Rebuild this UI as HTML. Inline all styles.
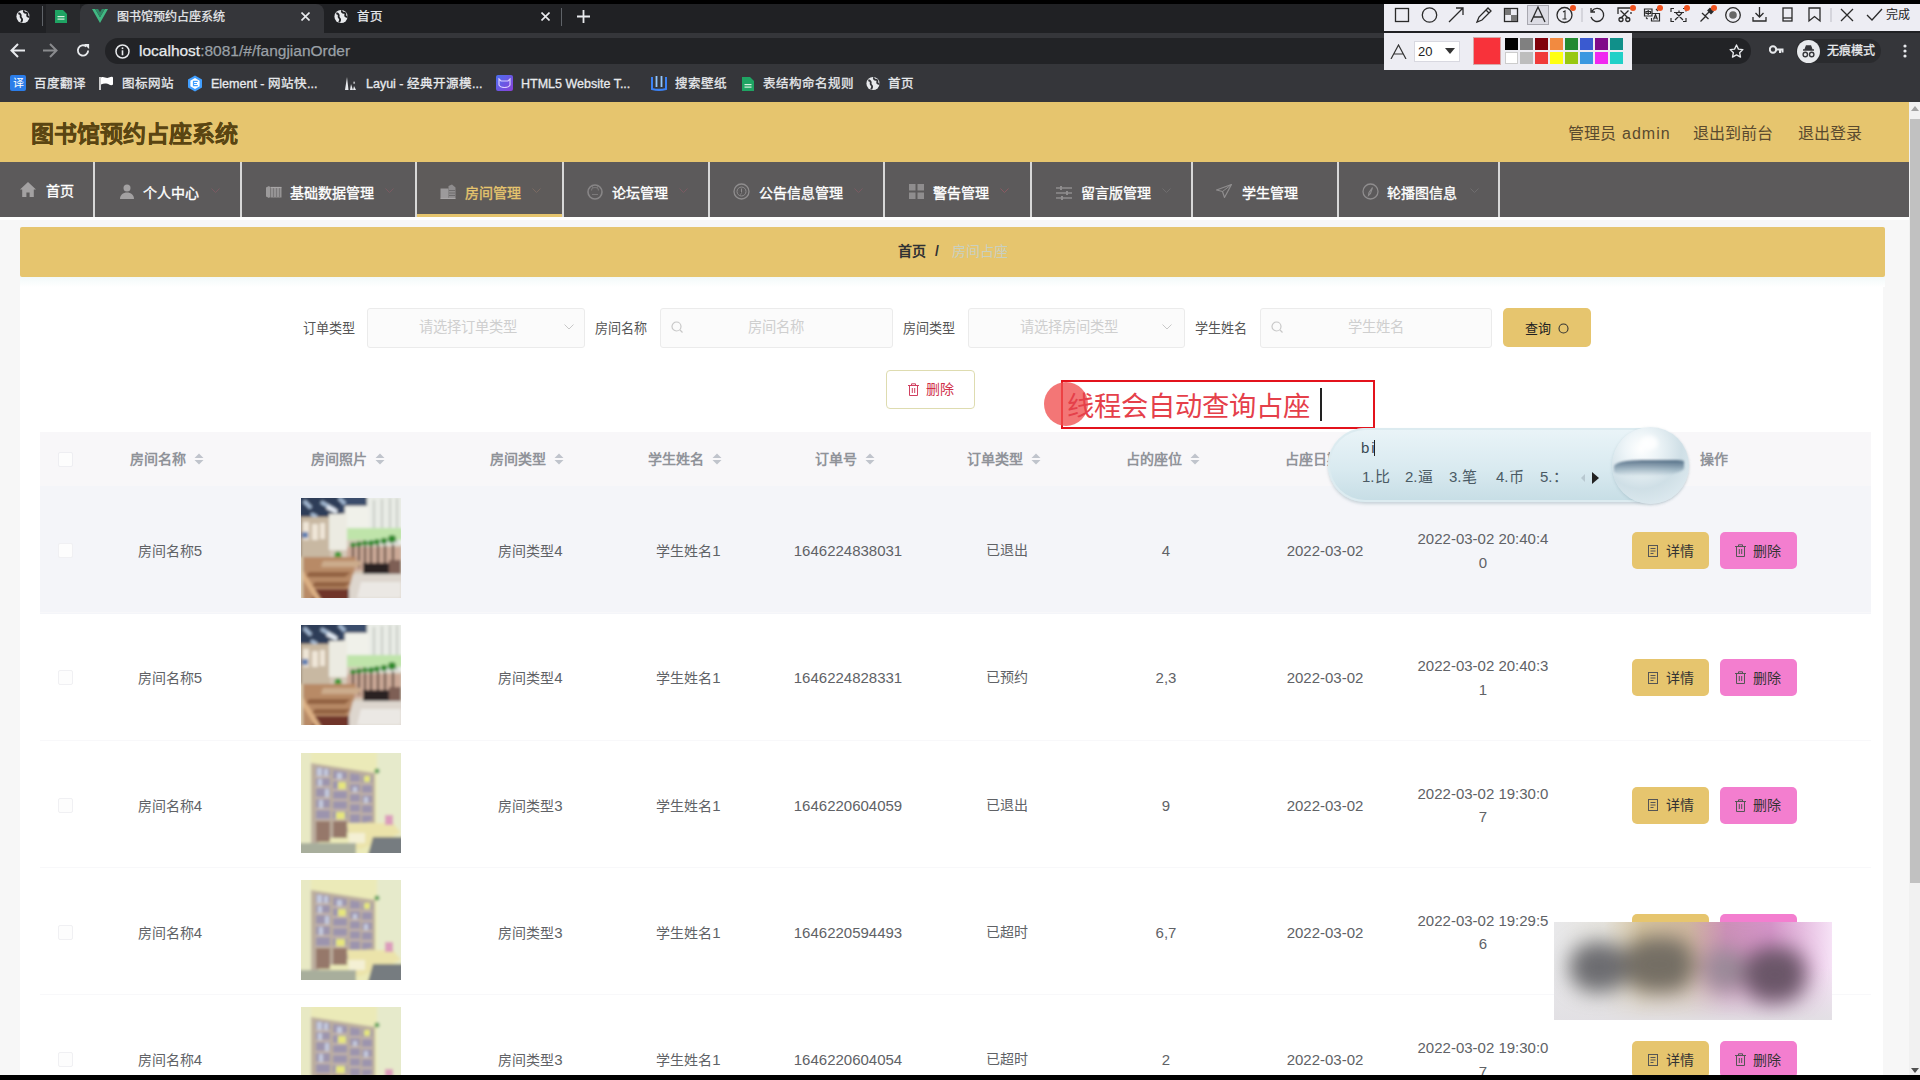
<!DOCTYPE html>
<html lang="zh-CN">
<head>
<meta charset="utf-8">
<style>
*{box-sizing:border-box;margin:0;padding:0}
html,body{width:1920px;height:1080px;overflow:hidden;background:#f7f7f7;font-family:"Liberation Sans",sans-serif}
.a{position:absolute}
.t{position:absolute;white-space:nowrap;line-height:1}
/* chrome */
#chrome{left:0;top:0;width:1920px;height:102px;background:#35363a}
#tabstrip{left:0;top:0;width:1920px;height:33px;background:#202124}
#topblack{left:0;top:0;width:1920px;height:4px;background:#000}
.tabtxt{color:#e8eaed;font-size:13px;-webkit-text-stroke:0.25px currentColor}
.bm{color:#e8eaed;font-size:12.5px;-webkit-text-stroke:0.3px currentColor}
/* header */
#hdr{left:0;top:102px;width:1909px;height:60px;background:#e6c56e}
#nav{left:0;top:162px;width:1909px;height:55px;background:#5c5a5b}
.sep{position:absolute;top:162px;width:2px;height:55px;background:#d8d8d8}
.nt{position:absolute;color:#fff;font-size:14px;font-weight:normal;-webkit-text-stroke:0.35px currentColor;line-height:1;white-space:nowrap}
.ni{position:absolute}
/* body */
#crumb{left:20px;top:227px;width:1865px;height:50px;background:#e6c56e;border-radius:2px}
#card{left:20px;top:287px;width:1863px;height:800px;background:#fff}
.lbl{position:absolute;color:#555;font-size:13.1px;line-height:1;white-space:nowrap}
.inp{position:absolute;top:308px;height:40px;background:#fbfbfb;border:1px solid #ebebeb;border-radius:3px}
.ph{position:absolute;color:#cfcfcf;font-size:14.3px;line-height:1;white-space:nowrap}
/* table */
.th{position:absolute;color:#909399;font-size:14px;font-weight:bold;line-height:1;white-space:nowrap}
.td{position:absolute;color:#606266;font-size:14px;line-height:1;white-space:nowrap;text-align:center}
.n{font-size:15px}
.btn{position:absolute;height:37px;width:77px;border-radius:5px;font-size:14px;color:#333}
</style>
</head>
<body>
<svg width="0" height="0" style="position:absolute">
<defs>
<filter id="bl" x="0" y="0" width="100%" height="100%"><feGaussianBlur stdDeviation="1.7"/></filter>
<symbol id="imgL" viewBox="0 0 100 100">
<g filter="url(#bl)">
<rect x="-5" y="-5" width="110" height="110" fill="#d4c8b8"/>
<path d="M-5 -5h80v14l-30 6-50 8z" fill="#3a4e6c"/>
<path d="M-5 -5h45v24H-5z" fill="#2e3e58"/>
<path d="M3 3l7 7M20 4l14 8M38 0l6 6M10 16l6 3" stroke="#a8bed8" stroke-width="3.5"/>
<path d="M26 9l10 5" stroke="#e8eef6" stroke-width="4"/>
<path d="M66 -5h39v52H66z" fill="#e9ece6"/>
<path d="M44 8h24v34H44z" fill="#f0f1ea"/>
<path d="M73 2v44M81 1v45M89 0v46M96 0v46" stroke="#b8beb6" stroke-width="1.4"/>
<path d="M-5 19h34v40H-5z" fill="#c8b8a2"/>
<path d="M28 16h18v36H28z" fill="#ecebe2"/>
<path d="M2 24h6v18H2zM11 26h6v16h-6zM19 25h5v16h-5z" fill="#efe6d8"/>
<path d="M-5 20h5v42h-5z" fill="#6e6458"/>
<path d="M1 34h6v6H1z" fill="#5a7cb0"/>
<path d="M46 30h56v12H46z" fill="#bfe4aa"/>
<circle cx="52" cy="47" r="2.8" fill="#2e8a2a"/><circle cx="58" cy="46" r="2.8" fill="#2e8a2a"/><circle cx="64" cy="45" r="2.8" fill="#2e8a2a"/><circle cx="70" cy="45" r="3" fill="#2e8a2a"/><circle cx="76" cy="44" r="3" fill="#2e8a2a"/><circle cx="83" cy="43" r="3.3" fill="#2e8a2a"/><circle cx="91" cy="41" r="4" fill="#2e8a2a"/>
<circle cx="37" cy="57" r="3.5" fill="#3a9a30"/>
<path d="M46 49h54v24H46z" fill="#cba896"/>
<path d="M52 49v20M58 48v22M64 48v22M70 48v22M77 47v24M84 47v25M92 46v26" stroke="#3e2c26" stroke-width="1.8"/>
<path d="M62 65h28v11H62z" fill="#2a2222"/>
<path d="M88 62h12v22H88z" fill="#7e5e54"/>
<path d="M-5 59h60l-6 46H-5z" fill="#b88a66"/>
<path d="M22 63h38l-2 6H20z" fill="#ccac8c"/>
<path d="M8 74h42l-6 5H4zM14 84h36l-6 5H10z" fill="#92603f"/>
<path d="M52 76h53v29H44z" fill="#ddd6ce"/>
<path d="M60 84h40v16H56z" fill="#ebe8e4"/>
<path d="M14 91h34v14H10z" fill="#70362c"/>
<path d="M-5 66l24 38" stroke="#dcb084" stroke-width="5"/>
<path d="M-5 59h7v46h-7z" fill="#d8caae"/>
</g>
</symbol>
<symbol id="imgB" viewBox="0 0 100 100">
<g filter="url(#bl)">
<rect x="-5" y="-5" width="110" height="110" fill="#ebeab8"/>
<rect x="76" y="-5" width="29" height="88" fill="#e6eacb"/>
<path d="M-5 -5h15v95H-5z" fill="#e8e9c4"/>
<path d="M10 10l64 10v50l-64 22z" fill="#bcae9e"/>
<path d="M15 14l14 2v72l-14 1zM32 17l14 2v62l-14 4zM49 20l10 1.5v54l-10 3zM61 22l10 1.5v44l-10 3z" fill="#9c94ae"/>
<path d="M15 24h14M15 34h14M15 45h14M15 56h14M15 67h14M15 78h14M32 27h14M32 37h14M32 47h14M32 57h14M32 67h14M49 30h10M49 40h10M49 50h10M49 60h10M61 31h10M61 41h10M61 51h10M61 61h10" stroke="#c8b8a8" stroke-width="1.8"/>
<path d="M16 15h5v8h-5zM23 16h4v7h-4zM17 26h4v7h-4zM24 36h4v8h-4zM18 47h4v8h-4zM36 20h5v6h-5zM52 34h4v5h-4zM63 44h4v6h-4z" fill="#c4cade"/>
<path d="M37 29h8v7h-8zM35 59h9v7h-9zM63 23h6v6h-6z" fill="#e6e67c"/>
<path d="M15 68h14v21H15zM32 68h14v17H32z" fill="#96786a"/>
<path d="M46 70h46l8 10-40 16H50z" fill="#ebe3aa"/>
<path d="M48 80h16v10H48z" fill="#f4f0d4"/>
<path d="M84 62h8v10h-8z" fill="#dc9cbc"/>
<path d="M-5 90h60v15H-5z" fill="#a8ae9c"/>
<path d="M72 84h33v21H66z" fill="#767c80"/>
<circle cx="76" cy="18" r="2.5" fill="#58a058"/>
</g>
</symbol>
</defs>
</svg>
<!-- ============ BROWSER CHROME ============ -->
<div class="a" id="chrome"></div>
<div class="a" id="tabstrip"></div>
<div class="a" id="topblack"></div>

<!-- tab strip content -->
<svg class="a" style="left:15px;top:9px" width="16" height="15" viewBox="0 0 16 16"><circle cx="8" cy="8" r="7" fill="#e8eaed"/><path d="M3 4.5c2 .5 3 1.5 2.5 3s1 2 1.5 3.5-1 2.5-1 3.5M9 1.5c-.5 1.5.5 2.5 2 2.5s2 1 1.5 2.5 1 2 2.5 1.5" stroke="#202124" stroke-width="2" fill="none"/></svg>
<div class="a" style="left:42px;top:6px;width:1px;height:20px;background:#5f6368"></div>
<div class="a" style="left:46px;top:4px;width:34px;height:29px;background:#28292c"></div>
<svg class="a" style="left:54px;top:9px" width="14" height="14" viewBox="0 0 14 14"><path d="M1 1h8l4 4v9H1z" fill="#1fa463"/><rect x="3.5" y="7" width="7" height="1.2" fill="#d8f0e0"/><rect x="3.5" y="9.5" width="7" height="1.2" fill="#d8f0e0"/></svg>
<div class="a" style="left:80px;top:4px;width:244px;height:30px;background:#35363a;border-radius:8px 8px 0 0"></div>
<svg class="a" style="left:92px;top:9px" width="16" height="14" viewBox="0 0 16 14"><path d="M0 0h3.2L8 8.3 12.8 0H16L8 14z" fill="#41b883"/><path d="M3.2 0h2.9L8 3.3 9.9 0h2.9L8 8.3z" fill="#2e8a66"/></svg>
<div class="t tabtxt" style="left:117px;top:11px;font-size:12px">图书馆预约占座系统</div>
<svg class="a" style="left:301px;top:12px" width="9" height="9" viewBox="0 0 9 9"><path d="M0.5 0.5l8 8M8.5 0.5l-8 8" stroke="#e8eaed" stroke-width="1.6"/></svg>
<svg class="a" style="left:333px;top:9px" width="16" height="15" viewBox="0 0 16 16"><circle cx="8" cy="8" r="7" fill="#e8eaed"/><path d="M3 4.5c2 .5 3 1.5 2.5 3s1 2 1.5 3.5-1 2.5-1 3.5M9 1.5c-.5 1.5.5 2.5 2 2.5s2 1 1.5 2.5 1 2 2.5 1.5" stroke="#202124" stroke-width="2" fill="none"/></svg>
<div class="t tabtxt" style="left:357px;top:11px;font-size:12.5px">首页</div>
<svg class="a" style="left:541px;top:12px" width="9" height="9" viewBox="0 0 9 9"><path d="M0.5 0.5l8 8M8.5 0.5l-8 8" stroke="#e8eaed" stroke-width="1.6"/></svg>
<div class="a" style="left:561px;top:8px;width:1px;height:18px;background:#5f6368"></div>
<svg class="a" style="left:577px;top:10px" width="13" height="13" viewBox="0 0 13 13"><path d="M6.5 0v13M0 6.5h13" stroke="#e8eaed" stroke-width="1.8"/></svg>
<!-- toolbar -->
<svg class="a" style="left:10px;top:43px" width="16" height="15" viewBox="0 0 16 15"><path d="M15 7.5H2M8 1L1.5 7.5 8 14" stroke="#e8eaed" stroke-width="2" fill="none"/></svg>
<svg class="a" style="left:42px;top:43px" width="16" height="15" viewBox="0 0 16 15"><path d="M1 7.5h13M8 1l6.5 6.5L8 14" stroke="#8a8b8e" stroke-width="2" fill="none"/></svg>
<svg class="a" style="left:75px;top:43px" width="16" height="15" viewBox="0 0 16 16"><path d="M13.5 8A5.5 5.5 0 1 1 11.6 3.8" stroke="#e8eaed" stroke-width="2" fill="none"/><path d="M9 1h5.5v5.5z" fill="#e8eaed"/></svg>
<div class="a" style="left:105px;top:38px;width:1646px;height:26px;background:#222326;border-radius:13px"></div>
<svg class="a" style="left:115px;top:44px" width="15" height="15" viewBox="0 0 15 15"><circle cx="7.5" cy="7.5" r="6.5" stroke="#e8eaed" stroke-width="1.5" fill="none"/><rect x="6.7" y="6.3" width="1.6" height="5" fill="#e8eaed"/><rect x="6.7" y="3.4" width="1.6" height="1.7" fill="#e8eaed"/></svg>
<div class="t" style="left:139px;top:42.5px;font-size:15.5px;color:#e8eaed;-webkit-text-stroke:0.25px currentColor">localhost<span style="color:#9aa0a6">:8081/#/fangjianOrder</span></div>
<svg class="a" style="left:1729px;top:44px" width="15" height="14" viewBox="0 0 24 23"><path d="M12 1.5l3.2 6.9 7.3.8-5.4 5 1.5 7.3L12 17.8l-6.6 3.7 1.5-7.3-5.4-5 7.3-.8z" stroke="#e8eaed" stroke-width="2.2" fill="none" stroke-linejoin="round"/></svg>
<svg class="a" style="left:1769px;top:45px" width="15" height="11" viewBox="0 0 15 11"><circle cx="4" cy="4.5" r="3.2" stroke="#e8eaed" stroke-width="2" fill="none"/><path d="M7 4.5h7.5M11 4.5v3.5M13.5 4.5v3" stroke="#e8eaed" stroke-width="2"/></svg>
<div class="a" style="left:1796px;top:39px;width:85px;height:24px;background:#2a2b2e;border-radius:12px"></div>
<svg class="a" style="left:1797px;top:40px" width="23" height="23" viewBox="0 0 23 23"><circle cx="11.5" cy="11.5" r="11.5" fill="#e8eaed"/><path d="M6 10h11M8 10l1.5-4h4l1.5 4" stroke="#35363a" stroke-width="1.6" fill="#35363a"/><circle cx="8.3" cy="14.5" r="2.2" stroke="#35363a" stroke-width="1.4" fill="none"/><circle cx="14.7" cy="14.5" r="2.2" stroke="#35363a" stroke-width="1.4" fill="none"/></svg>
<div class="t" style="left:1827px;top:45px;font-size:12px;color:#e8eaed;-webkit-text-stroke:0.3px currentColor">无痕模式</div>
<svg class="a" style="left:1903px;top:44px" width="4" height="14" viewBox="0 0 4 14"><circle cx="2" cy="2" r="1.6" fill="#e8eaed"/><circle cx="2" cy="7" r="1.6" fill="#e8eaed"/><circle cx="2" cy="12" r="1.6" fill="#e8eaed"/></svg>
<!-- bookmarks -->
<div class="a" style="left:10px;top:75px;width:16px;height:16px;background:#2b7de9;border-radius:2px;color:#fff;font-size:11px;line-height:16px;text-align:center">译</div>
<div class="t bm" style="left:34px;top:78px">百度翻译</div>
<svg class="a" style="left:99px;top:76px" width="15" height="14" viewBox="0 0 15 14"><path d="M1 1v13" stroke="#fff" stroke-width="1.5"/><path d="M2 1.5c3-1.5 5 1.5 8 0s3.5-.5 4 0v7c-1 1-2.5 1-4 0s-5-1.5-8 0z" fill="#fff"/></svg>
<div class="t bm" style="left:122px;top:78px">图标网站</div>
<svg class="a" style="left:187px;top:75px" width="16" height="17" viewBox="0 0 16 17"><path d="M8 .5l7 4v8l-7 4-7-4v-8z" fill="#409eff"/><path d="M8 3l4.6 2.7v5.6L8 14l-4.6-2.7V5.7z" fill="#fff"/><path d="M10.8 6.3H6.5v4.4h4.3M6.5 8.5h3.5" stroke="#409eff" stroke-width="1.2" fill="none"/></svg>
<div class="t bm" style="left:211px;top:78px">Element - 网站快...</div>
<svg class="a" style="left:344px;top:76px" width="13" height="14" viewBox="0 0 13 14"><path d="M3 1l-2 13h3.5zM7 8l-1 6h3zM10 5l-.8 2.5h2zM10 10l-1 4h3z" fill="#e8eaed"/></svg>
<div class="t bm" style="left:366px;top:78px">Layui - 经典开源模...</div>
<div class="a" style="left:496px;top:75px;width:17px;height:16px;background:linear-gradient(135deg,#4a6ff0,#8a40d8);border-radius:2px"></div>
<svg class="a" style="left:498px;top:78px" width="13" height="10" viewBox="0 0 13 10"><path d="M1 1l2 2h7l2-2v6c-1 2-3 2.5-5.5 2.5S2 9 1 7z" stroke="#d8ccff" stroke-width="1.2" fill="none"/></svg>
<div class="t bm" style="left:521px;top:78px">HTML5 Website T...</div>
<svg class="a" style="left:651px;top:75px" width="16" height="16" viewBox="0 0 16 16"><path d="M1 2v12c4 1 10 1 14 0V2" stroke="#3b82f6" stroke-width="2" fill="none"/><path d="M5.5 1v11M10.5 1v11" stroke="#93c5fd" stroke-width="1.8"/></svg>
<div class="t bm" style="left:675px;top:78px">搜索壁纸</div>
<svg class="a" style="left:741px;top:76px" width="14" height="15" viewBox="0 0 14 15"><path d="M1 1h8l4 4v10H1z" fill="#1fa463"/><rect x="3.5" y="8" width="7" height="1.2" fill="#d8f0e0"/><rect x="3.5" y="10.5" width="7" height="1.2" fill="#d8f0e0"/></svg>
<div class="t bm" style="left:763px;top:78px">表结构命名规则</div>
<svg class="a" style="left:865px;top:76px" width="16" height="15" viewBox="0 0 16 16"><circle cx="8" cy="8" r="7" fill="#e8eaed"/><path d="M3 4.5c2 .5 3 1.5 2.5 3s1 2 1.5 3.5-1 2.5-1 3.5M9 1.5c-.5 1.5.5 2.5 2 2.5s2 1 1.5 2.5 1 2 2.5 1.5" stroke="#35363a" stroke-width="2" fill="none"/></svg>
<div class="t bm" style="left:888px;top:78px">首页</div>
<!--CHROME_END-->

<!-- ============ APP HEADER ============ -->
<div class="a" id="hdr"></div>
<div class="t" style="left:31px;top:123px;font-size:23px;font-weight:bold;color:#5a4512;-webkit-text-stroke:0.3px currentColor">图书馆预约占座系统</div>
<div class="t" style="left:1568px;top:126px;font-size:16px;color:#5a4a2e">管理员<span style="margin-left:6px;letter-spacing:1px">admin</span></div>
<div class="t" style="left:1693px;top:126px;font-size:16px;color:#5a4a2e">退出到前台</div>
<div class="t" style="left:1798px;top:126px;font-size:16px;color:#5a4a2e">退出登录</div>
<!-- nav -->
<div class="a" id="nav"></div>
<div class="a" style="left:416px;top:162px;width:147px;height:55px;background:#5e5b5a"></div>
<div class="a" style="left:416px;top:214px;width:147px;height:3px;background:#e6c56e"></div>
<div class="sep" style="left:93px"></div>
<div class="sep" style="left:240px"></div>
<div class="sep" style="left:415px"></div>
<div class="sep" style="left:562px"></div>
<div class="sep" style="left:708px"></div>
<div class="sep" style="left:883px"></div>
<div class="sep" style="left:1030px"></div>
<div class="sep" style="left:1191px"></div>
<div class="sep" style="left:1337px"></div>
<div class="sep" style="left:1498px"></div>
<!-- nav icons -->
<svg class="ni" style="left:20px;top:182px" width="16" height="15" viewBox="0 0 16 15"><path d="M8 0L0 7.5h2.2V15h4.2v-4.5h3.2V15h4.2V7.5H16z" fill="#a3a1a2"/></svg>
<div class="nt" style="left:46px;top:184px">首页</div>
<svg class="ni" style="left:120px;top:184px" width="14" height="15" viewBox="0 0 14 15"><circle cx="7" cy="4" r="3.5" fill="#a3a1a2"/><path d="M0 15c0-4 3-6.5 7-6.5s7 2.5 7 6.5z" fill="#a3a1a2"/></svg>
<div class="nt" style="left:143px;top:186px">个人中心</div>
<svg class="ni" style="left:265px;top:185.5px" width="17" height="12" viewBox="0 0 17 12"><path d="M1 1.5l3-1.5 1 1v10l-1 1-3-1.5z" fill="#9c9a9b"/><rect x="5.5" y="1.5" width="11" height="10" fill="#959394"/><path d="M8.5 2v9M11.5 2v9M14.5 2v9" stroke="#7a7879" stroke-width="1"/><path d="M5.5 1.5h11" stroke="#a8a6a7" stroke-width="1.2"/></svg>
<div class="nt" style="left:290px;top:186px">基础数据管理</div>
<svg class="ni" style="left:440px;top:184px" width="16" height="15" viewBox="0 0 16 15"><path d="M0.5 4.5h8v10h-8z" fill="#9c9a9b"/><path d="M8.5 2l3.5-1.5 3.5 3v11h-7z" fill="#8f8d8e"/><path d="M9 6.5h6M9 9h6M9 11.5h6" stroke="#6e6c6d" stroke-width="1"/><path d="M0.5 14.5h15" stroke="#a8a6a7" stroke-width="1.2"/></svg>
<div class="nt" style="left:465px;top:186px;color:#e6c56e">房间管理</div>
<svg class="ni" style="left:587px;top:184px" width="16" height="16" viewBox="0 0 16 16"><circle cx="8" cy="8" r="7" stroke="#888687" stroke-width="1.6" fill="none"/><path d="M4.5 6.5a3.5 3 0 0 1 7 0M6 4l-1-2M10 4l1-2M5 10.5h6" stroke="#7c7a7b" stroke-width="1.1" fill="none"/></svg>
<div class="nt" style="left:612px;top:186px">论坛管理</div>
<svg class="ni" style="left:733px;top:183px" width="17" height="17" viewBox="0 0 17 17"><circle cx="8.5" cy="8.5" r="7.5" stroke="#8f8d8e" stroke-width="1.3" fill="none"/><circle cx="8.5" cy="8.5" r="4.5" stroke="#8f8d8e" stroke-width="1" fill="none"/><path d="M8.5 5.5v4l-1 2" stroke="#8f8d8e" stroke-width="1"/></svg>
<div class="nt" style="left:759px;top:186px">公告信息管理</div>
<svg class="ni" style="left:909px;top:184px" width="15" height="15" viewBox="0 0 15 15"><rect x="0" y="0" width="6.5" height="6.5" fill="#8f8d8e"/><rect x="8.5" y="0" width="6.5" height="6.5" fill="#8f8d8e"/><rect x="0" y="8.5" width="6.5" height="6.5" fill="#8f8d8e"/><rect x="8.5" y="8.5" width="6.5" height="6.5" fill="#8f8d8e"/></svg>
<div class="nt" style="left:933px;top:186px">警告管理</div>
<svg class="ni" style="left:1056px;top:186px" width="16" height="14" viewBox="0 0 16 14"><path d="M0 2h16M0 7h16M0 12h16" stroke="#8f8d8e" stroke-width="1.5"/><rect x="4" y="0" width="2" height="4" fill="#8f8d8e"/><rect x="10" y="5" width="2" height="4" fill="#8f8d8e"/><rect x="5" y="10" width="2" height="4" fill="#8f8d8e"/></svg>
<div class="nt" style="left:1081px;top:186px">留言版管理</div>
<svg class="ni" style="left:1216px;top:184px" width="16" height="14" viewBox="0 0 16 14"><path d="M15.5 0.5L0.5 6l6 1.5 2 6z" stroke="#8f8d8e" stroke-width="1.2" fill="none" stroke-linejoin="round"/><path d="M6.5 7.5L15.5 0.5" stroke="#8f8d8e" stroke-width="1"/></svg>
<div class="nt" style="left:1242px;top:186px">学生管理</div>
<svg class="ni" style="left:1362px;top:183px" width="17" height="17" viewBox="0 0 17 17"><circle cx="8.5" cy="8.5" r="7.5" stroke="#8f8d8e" stroke-width="1.3" fill="none"/><path d="M10.5 4.5l-2 6-2 2 .5-3z" stroke="#8f8d8e" stroke-width="1.1" fill="none"/></svg>
<div class="nt" style="left:1387px;top:186px">轮播图信息</div>
<!-- faint dropdown arrows -->
<svg class="ni" style="left:211px;top:188px" width="9" height="6" viewBox="0 0 9 6"><path d="M.5.5l4 4 4-4" stroke="#7a5a62" stroke-width="1" fill="none"/></svg>
<svg class="ni" style="left:385px;top:188px" width="9" height="6" viewBox="0 0 9 6"><path d="M.5.5l4 4 4-4" stroke="#7a5a62" stroke-width="1" fill="none"/></svg>
<svg class="ni" style="left:532px;top:188px" width="9" height="6" viewBox="0 0 9 6"><path d="M.5.5l4 4 4-4" stroke="#7a6a62" stroke-width="1" fill="none"/></svg>
<svg class="ni" style="left:679px;top:188px" width="9" height="6" viewBox="0 0 9 6"><path d="M.5.5l4 4 4-4" stroke="#7a5a62" stroke-width="1" fill="none"/></svg>
<svg class="ni" style="left:854px;top:188px" width="9" height="6" viewBox="0 0 9 6"><path d="M.5.5l4 4 4-4" stroke="#7a5a62" stroke-width="1" fill="none"/></svg>
<svg class="ni" style="left:1000px;top:188px" width="9" height="6" viewBox="0 0 9 6"><path d="M.5.5l4 4 4-4" stroke="#8a5a62" stroke-width="1" fill="none"/></svg>
<svg class="ni" style="left:1162px;top:188px" width="9" height="6" viewBox="0 0 9 6"><path d="M.5.5l4 4 4-4" stroke="#6f6d6e" stroke-width="1" fill="none"/></svg>
<svg class="ni" style="left:1470px;top:188px" width="9" height="6" viewBox="0 0 9 6"><path d="M.5.5l4 4 4-4" stroke="#6f6d6e" stroke-width="1" fill="none"/></svg>
<!--HDR_END-->

<!-- ============ BODY ============ -->
<div class="a" style="left:0;top:217px;width:1909px;height:3px;background:#fff"></div>
<div class="a" id="card"></div>
<div class="a" style="left:20px;top:277px;width:1865px;height:10px;background:linear-gradient(#f2f9f9,#fff)"></div>
<div class="a" id="crumb"></div>
<div class="t" style="left:898px;top:244px;font-size:14px;font-weight:bold;color:#303133">首页</div>
<div class="t" style="left:935px;top:244px;font-size:14px;font-weight:bold;color:#303133">/</div>
<div class="t" style="left:952px;top:244px;font-size:14px;color:#c9d0c0">房间占座</div>
<!-- search form -->
<div class="lbl" style="left:303px;top:321.5px">订单类型</div>
<div class="inp" style="left:367px;width:218px"></div>
<div class="ph" style="left:419px;top:320px">请选择订单类型</div>
<svg class="a" style="left:564px;top:324px" width="10" height="6" viewBox="0 0 10 6"><path d="M.5.5l4.5 4.5 4.5-4.5" stroke="#c8c8c8" stroke-width="1" fill="none"/></svg>
<div class="lbl" style="left:595px;top:321.5px">房间名称</div>
<div class="inp" style="left:660px;width:233px"></div>
<svg class="a" style="left:671px;top:321px" width="12" height="12" viewBox="0 0 12 12"><circle cx="5.5" cy="5.5" r="4.5" stroke="#c8c8c8" stroke-width="1.2" fill="none"/><path d="M9 9l2.5 2.5" stroke="#c8c8c8" stroke-width="1.2"/></svg>
<div class="ph" style="left:748px;top:320px">房间名称</div>
<div class="lbl" style="left:903px;top:321.5px">房间类型</div>
<div class="inp" style="left:968px;width:217px"></div>
<div class="ph" style="left:1020px;top:320px">请选择房间类型</div>
<svg class="a" style="left:1162px;top:324px" width="10" height="6" viewBox="0 0 10 6"><path d="M.5.5l4.5 4.5 4.5-4.5" stroke="#c8c8c8" stroke-width="1" fill="none"/></svg>
<div class="lbl" style="left:1195px;top:321.5px">学生姓名</div>
<div class="inp" style="left:1260px;width:232px"></div>
<svg class="a" style="left:1271px;top:321px" width="12" height="12" viewBox="0 0 12 12"><circle cx="5.5" cy="5.5" r="4.5" stroke="#c8c8c8" stroke-width="1.2" fill="none"/><path d="M9 9l2.5 2.5" stroke="#c8c8c8" stroke-width="1.2"/></svg>
<div class="ph" style="left:1348px;top:320px">学生姓名</div>
<div class="a" style="left:1503px;top:308px;width:88px;height:39px;background:#e6c56e;border-radius:5px"></div>
<div class="t" style="left:1525px;top:321.5px;font-size:13px;color:#222">查询</div>
<svg class="a" style="left:1558px;top:322.5px" width="11" height="11" viewBox="0 0 11 11"><circle cx="5.5" cy="5.5" r="4.5" stroke="#333" stroke-width="1.1" fill="none"/></svg>
<!-- delete button -->
<div class="a" style="left:886px;top:370px;width:89px;height:39px;background:#fff;border:1px solid #dedcb0;border-radius:4px"></div>
<svg class="a" style="left:908px;top:383px" width="11" height="13" viewBox="0 0 11 13"><path d="M0 2.5h11M3.5 2.5V.8h4v1.7M1.5 2.5v10h8v-10" stroke="#d04060" stroke-width="1" fill="none"/><path d="M4.3 5v5M6.7 5v5" stroke="#d04060" stroke-width="1"/></svg>
<div class="t" style="left:926px;top:382px;font-size:14px;color:#d0304a">删除</div>
<!--BODY_END-->
<!-- ============ TABLE ============ -->
<div class="a" style="left:40px;top:432px;width:1831px;height:54px;background:#f8f7f9"></div>
<div class="a" style="left:40px;top:486px;width:1831px;height:128px;background:#f4f5f9"></div>
<div class="a" style="left:40px;top:612.25px;width:1831px;height:1px;background:#f8f8fa"></div>
<div class="a" style="left:40px;top:739.50px;width:1831px;height:1px;background:#f8f8fa"></div>
<div class="a" style="left:40px;top:866.75px;width:1831px;height:1px;background:#f8f8fa"></div>
<div class="a" style="left:40px;top:994.00px;width:1831px;height:1px;background:#f8f8fa"></div>
<div class="a" style="left:40px;top:1121.25px;width:1831px;height:1px;background:#f8f8fa"></div>
<div class="a" style="left:58px;top:452px;width:15px;height:15px;border:1px solid #eeeef2;background:#fdfdfd;border-radius:2px"></div>
<div class="th" style="left:130.0px;top:452px">房间名称<svg style="display:inline-block;vertical-align:top;margin-left:8px;margin-top:0px" width="10" height="14" viewBox="0 0 10 14"><path d="M0.5 6L5 1.5 9.5 6z M0.5 8l4.5 4.5L9.5 8z" fill="#c0c4cc"/></svg><span style="display:inline-block;width:6px"></span></div>
<div class="th" style="left:310.7px;top:452px">房间照片<svg style="display:inline-block;vertical-align:top;margin-left:8px;margin-top:0px" width="10" height="14" viewBox="0 0 10 14"><path d="M0.5 6L5 1.5 9.5 6z M0.5 8l4.5 4.5L9.5 8z" fill="#c0c4cc"/></svg><span style="display:inline-block;width:6px"></span></div>
<div class="th" style="left:490.3px;top:452px">房间类型<svg style="display:inline-block;vertical-align:top;margin-left:8px;margin-top:0px" width="10" height="14" viewBox="0 0 10 14"><path d="M0.5 6L5 1.5 9.5 6z M0.5 8l4.5 4.5L9.5 8z" fill="#c0c4cc"/></svg><span style="display:inline-block;width:6px"></span></div>
<div class="th" style="left:648.4px;top:452px">学生姓名<svg style="display:inline-block;vertical-align:top;margin-left:8px;margin-top:0px" width="10" height="14" viewBox="0 0 10 14"><path d="M0.5 6L5 1.5 9.5 6z M0.5 8l4.5 4.5L9.5 8z" fill="#c0c4cc"/></svg><span style="display:inline-block;width:6px"></span></div>
<div class="th" style="left:815.0px;top:452px">订单号<svg style="display:inline-block;vertical-align:top;margin-left:8px;margin-top:0px" width="10" height="14" viewBox="0 0 10 14"><path d="M0.5 6L5 1.5 9.5 6z M0.5 8l4.5 4.5L9.5 8z" fill="#c0c4cc"/></svg><span style="display:inline-block;width:6px"></span></div>
<div class="th" style="left:967.0px;top:452px">订单类型<svg style="display:inline-block;vertical-align:top;margin-left:8px;margin-top:0px" width="10" height="14" viewBox="0 0 10 14"><path d="M0.5 6L5 1.5 9.5 6z M0.5 8l4.5 4.5L9.5 8z" fill="#c0c4cc"/></svg><span style="display:inline-block;width:6px"></span></div>
<div class="th" style="left:1126.0px;top:452px">占的座位<svg style="display:inline-block;vertical-align:top;margin-left:8px;margin-top:0px" width="10" height="14" viewBox="0 0 10 14"><path d="M0.5 6L5 1.5 9.5 6z M0.5 8l4.5 4.5L9.5 8z" fill="#c0c4cc"/></svg><span style="display:inline-block;width:6px"></span></div>
<div class="th" style="left:1285.0px;top:452px">占座日期<svg style="display:inline-block;vertical-align:top;margin-left:8px;margin-top:0px" width="10" height="14" viewBox="0 0 10 14"><path d="M0.5 6L5 1.5 9.5 6z M0.5 8l4.5 4.5L9.5 8z" fill="#c0c4cc"/></svg><span style="display:inline-block;width:6px"></span></div>
<div class="th" style="left:1443.0px;top:452px">占座时间<svg style="display:inline-block;vertical-align:top;margin-left:8px;margin-top:0px" width="10" height="14" viewBox="0 0 10 14"><path d="M0.5 6L5 1.5 9.5 6z M0.5 8l4.5 4.5L9.5 8z" fill="#c0c4cc"/></svg><span style="display:inline-block;width:6px"></span></div>
<div class="th" style="left:1700.0px;top:452px">操作</div>
<div class="a" style="left:58px;top:543.00px;width:15px;height:15px;border:1px solid #f0f0f3;background:#fdfdfd;border-radius:2px"></div>
<div class="td" style="left:95.0px;top:539.00px;width:150px;height:23px;line-height:23px">房间名称<span class="n">5</span></div>
<div class="td" style="left:455.3px;top:539.00px;width:150px;height:23px;line-height:23px">房间类型<span class="n">4</span></div>
<div class="td" style="left:613.4px;top:539.00px;width:150px;height:23px;line-height:23px">学生姓名<span class="n">1</span></div>
<div class="td" style="left:773.0px;top:539.00px;width:150px;height:23px;line-height:23px"><span class="n">1646224838031</span></div>
<div class="td" style="left:932.0px;top:539.00px;width:150px;height:23px;line-height:23px">已退出</div>
<div class="td" style="left:1091.0px;top:539.00px;width:150px;height:23px;line-height:23px"><span class="n">4</span></div>
<div class="td" style="left:1250.0px;top:539.00px;width:150px;height:23px;line-height:23px"><span class="n">2022-03-02</span></div>
<div class="td n" style="left:1408.0px;top:527.00px;width:150px;height:47px;line-height:23.5px">2022-03-02 20:40:4<br>0</div>
<svg class="a" style="left:300.5px;top:498.00px" width="100" height="100"><use href="#imgL"/></svg>
<div class="a btn" style="left:1632px;top:532.00px;background:#e6c56e"></div>
<svg class="a" style="left:1648px;top:544.50px" width="10" height="12" viewBox="0 0 10 12"><rect x=".5" y=".5" width="9" height="11" stroke="#555" fill="none"/><path d="M2.5 3.5h5M2.5 6h5M2.5 8.5h3" stroke="#555"/></svg>
<div class="t" style="left:1666px;top:543.50px;font-size:14px;color:#333">详情</div>
<div class="a btn" style="left:1719.5px;top:532.00px;background:#f37ecf"></div>
<svg class="a" style="left:1735px;top:544.00px" width="11" height="13" viewBox="0 0 11 13"><path d="M0 2.5h11M3.5 2.5V.8h4v1.7M1.5 2.5v10h8v-10" stroke="#555" stroke-width="1" fill="none"/><path d="M4.3 5v5M6.7 5v5" stroke="#555" stroke-width="1"/></svg>
<div class="t" style="left:1753px;top:543.50px;font-size:14px;color:#333">删除</div>
<div class="a" style="left:58px;top:670.25px;width:15px;height:15px;border:1px solid #f0f0f3;background:#fdfdfd;border-radius:2px"></div>
<div class="td" style="left:95.0px;top:666.25px;width:150px;height:23px;line-height:23px">房间名称<span class="n">5</span></div>
<div class="td" style="left:455.3px;top:666.25px;width:150px;height:23px;line-height:23px">房间类型<span class="n">4</span></div>
<div class="td" style="left:613.4px;top:666.25px;width:150px;height:23px;line-height:23px">学生姓名<span class="n">1</span></div>
<div class="td" style="left:773.0px;top:666.25px;width:150px;height:23px;line-height:23px"><span class="n">1646224828331</span></div>
<div class="td" style="left:932.0px;top:666.25px;width:150px;height:23px;line-height:23px">已预约</div>
<div class="td" style="left:1091.0px;top:666.25px;width:150px;height:23px;line-height:23px"><span class="n">2,3</span></div>
<div class="td" style="left:1250.0px;top:666.25px;width:150px;height:23px;line-height:23px"><span class="n">2022-03-02</span></div>
<div class="td n" style="left:1408.0px;top:654.25px;width:150px;height:47px;line-height:23.5px">2022-03-02 20:40:3<br>1</div>
<svg class="a" style="left:300.5px;top:625.25px" width="100" height="100"><use href="#imgL"/></svg>
<div class="a btn" style="left:1632px;top:659.25px;background:#e6c56e"></div>
<svg class="a" style="left:1648px;top:671.75px" width="10" height="12" viewBox="0 0 10 12"><rect x=".5" y=".5" width="9" height="11" stroke="#555" fill="none"/><path d="M2.5 3.5h5M2.5 6h5M2.5 8.5h3" stroke="#555"/></svg>
<div class="t" style="left:1666px;top:670.75px;font-size:14px;color:#333">详情</div>
<div class="a btn" style="left:1719.5px;top:659.25px;background:#f37ecf"></div>
<svg class="a" style="left:1735px;top:671.25px" width="11" height="13" viewBox="0 0 11 13"><path d="M0 2.5h11M3.5 2.5V.8h4v1.7M1.5 2.5v10h8v-10" stroke="#555" stroke-width="1" fill="none"/><path d="M4.3 5v5M6.7 5v5" stroke="#555" stroke-width="1"/></svg>
<div class="t" style="left:1753px;top:670.75px;font-size:14px;color:#333">删除</div>
<div class="a" style="left:58px;top:797.50px;width:15px;height:15px;border:1px solid #f0f0f3;background:#fdfdfd;border-radius:2px"></div>
<div class="td" style="left:95.0px;top:793.50px;width:150px;height:23px;line-height:23px">房间名称<span class="n">4</span></div>
<div class="td" style="left:455.3px;top:793.50px;width:150px;height:23px;line-height:23px">房间类型<span class="n">3</span></div>
<div class="td" style="left:613.4px;top:793.50px;width:150px;height:23px;line-height:23px">学生姓名<span class="n">1</span></div>
<div class="td" style="left:773.0px;top:793.50px;width:150px;height:23px;line-height:23px"><span class="n">1646220604059</span></div>
<div class="td" style="left:932.0px;top:793.50px;width:150px;height:23px;line-height:23px">已退出</div>
<div class="td" style="left:1091.0px;top:793.50px;width:150px;height:23px;line-height:23px"><span class="n">9</span></div>
<div class="td" style="left:1250.0px;top:793.50px;width:150px;height:23px;line-height:23px"><span class="n">2022-03-02</span></div>
<div class="td n" style="left:1408.0px;top:781.50px;width:150px;height:47px;line-height:23.5px">2022-03-02 19:30:0<br>7</div>
<svg class="a" style="left:300.5px;top:752.50px" width="100" height="100"><use href="#imgB"/></svg>
<div class="a btn" style="left:1632px;top:786.50px;background:#e6c56e"></div>
<svg class="a" style="left:1648px;top:799.00px" width="10" height="12" viewBox="0 0 10 12"><rect x=".5" y=".5" width="9" height="11" stroke="#555" fill="none"/><path d="M2.5 3.5h5M2.5 6h5M2.5 8.5h3" stroke="#555"/></svg>
<div class="t" style="left:1666px;top:798.00px;font-size:14px;color:#333">详情</div>
<div class="a btn" style="left:1719.5px;top:786.50px;background:#f37ecf"></div>
<svg class="a" style="left:1735px;top:798.50px" width="11" height="13" viewBox="0 0 11 13"><path d="M0 2.5h11M3.5 2.5V.8h4v1.7M1.5 2.5v10h8v-10" stroke="#555" stroke-width="1" fill="none"/><path d="M4.3 5v5M6.7 5v5" stroke="#555" stroke-width="1"/></svg>
<div class="t" style="left:1753px;top:798.00px;font-size:14px;color:#333">删除</div>
<div class="a" style="left:58px;top:924.75px;width:15px;height:15px;border:1px solid #f0f0f3;background:#fdfdfd;border-radius:2px"></div>
<div class="td" style="left:95.0px;top:920.75px;width:150px;height:23px;line-height:23px">房间名称<span class="n">4</span></div>
<div class="td" style="left:455.3px;top:920.75px;width:150px;height:23px;line-height:23px">房间类型<span class="n">3</span></div>
<div class="td" style="left:613.4px;top:920.75px;width:150px;height:23px;line-height:23px">学生姓名<span class="n">1</span></div>
<div class="td" style="left:773.0px;top:920.75px;width:150px;height:23px;line-height:23px"><span class="n">1646220594493</span></div>
<div class="td" style="left:932.0px;top:920.75px;width:150px;height:23px;line-height:23px">已超时</div>
<div class="td" style="left:1091.0px;top:920.75px;width:150px;height:23px;line-height:23px"><span class="n">6,7</span></div>
<div class="td" style="left:1250.0px;top:920.75px;width:150px;height:23px;line-height:23px"><span class="n">2022-03-02</span></div>
<div class="td n" style="left:1408.0px;top:908.75px;width:150px;height:47px;line-height:23.5px">2022-03-02 19:29:5<br>6</div>
<svg class="a" style="left:300.5px;top:879.75px" width="100" height="100"><use href="#imgB"/></svg>
<div class="a btn" style="left:1632px;top:913.75px;background:#e6c56e"></div>
<svg class="a" style="left:1648px;top:926.25px" width="10" height="12" viewBox="0 0 10 12"><rect x=".5" y=".5" width="9" height="11" stroke="#555" fill="none"/><path d="M2.5 3.5h5M2.5 6h5M2.5 8.5h3" stroke="#555"/></svg>
<div class="t" style="left:1666px;top:925.25px;font-size:14px;color:#333">详情</div>
<div class="a btn" style="left:1719.5px;top:913.75px;background:#f37ecf"></div>
<svg class="a" style="left:1735px;top:925.75px" width="11" height="13" viewBox="0 0 11 13"><path d="M0 2.5h11M3.5 2.5V.8h4v1.7M1.5 2.5v10h8v-10" stroke="#555" stroke-width="1" fill="none"/><path d="M4.3 5v5M6.7 5v5" stroke="#555" stroke-width="1"/></svg>
<div class="t" style="left:1753px;top:925.25px;font-size:14px;color:#333">删除</div>
<div class="a" style="left:58px;top:1052.00px;width:15px;height:15px;border:1px solid #f0f0f3;background:#fdfdfd;border-radius:2px"></div>
<div class="td" style="left:95.0px;top:1048.00px;width:150px;height:23px;line-height:23px">房间名称<span class="n">4</span></div>
<div class="td" style="left:455.3px;top:1048.00px;width:150px;height:23px;line-height:23px">房间类型<span class="n">3</span></div>
<div class="td" style="left:613.4px;top:1048.00px;width:150px;height:23px;line-height:23px">学生姓名<span class="n">1</span></div>
<div class="td" style="left:773.0px;top:1048.00px;width:150px;height:23px;line-height:23px"><span class="n">1646220604054</span></div>
<div class="td" style="left:932.0px;top:1048.00px;width:150px;height:23px;line-height:23px">已超时</div>
<div class="td" style="left:1091.0px;top:1048.00px;width:150px;height:23px;line-height:23px"><span class="n">2</span></div>
<div class="td" style="left:1250.0px;top:1048.00px;width:150px;height:23px;line-height:23px"><span class="n">2022-03-02</span></div>
<div class="td n" style="left:1408.0px;top:1036.00px;width:150px;height:47px;line-height:23.5px">2022-03-02 19:30:0<br>7</div>
<svg class="a" style="left:300.5px;top:1007.00px" width="100" height="100"><use href="#imgB"/></svg>
<div class="a btn" style="left:1632px;top:1041.00px;background:#e6c56e"></div>
<svg class="a" style="left:1648px;top:1053.50px" width="10" height="12" viewBox="0 0 10 12"><rect x=".5" y=".5" width="9" height="11" stroke="#555" fill="none"/><path d="M2.5 3.5h5M2.5 6h5M2.5 8.5h3" stroke="#555"/></svg>
<div class="t" style="left:1666px;top:1052.50px;font-size:14px;color:#333">详情</div>
<div class="a btn" style="left:1719.5px;top:1041.00px;background:#f37ecf"></div>
<svg class="a" style="left:1735px;top:1053.00px" width="11" height="13" viewBox="0 0 11 13"><path d="M0 2.5h11M3.5 2.5V.8h4v1.7M1.5 2.5v10h8v-10" stroke="#555" stroke-width="1" fill="none"/><path d="M4.3 5v5M6.7 5v5" stroke="#555" stroke-width="1"/></svg>
<div class="t" style="left:1753px;top:1052.50px;font-size:14px;color:#333">删除</div>
<!--TABLE_END-->

<!-- ============ OVERLAYS ============ -->
<!-- red annotation -->
<div class="a" style="left:1061px;top:380px;width:314px;height:49px;border:2px solid #e3131c;background:rgba(255,255,255,0.9)"></div>
<div class="a" style="left:1044px;top:382px;width:44px;height:44px;border-radius:50%;background:rgba(240,80,80,0.78)"></div>
<div class="t" style="left:1067px;top:393px;font-size:27.3px;color:#e5404a">线程会自动查询占座</div>
<div class="a" style="left:1320px;top:388px;width:2px;height:33px;background:#222"></div>
<!-- IME -->
<div class="a" style="left:1328px;top:428px;width:360px;height:74px;border-radius:37px;background:linear-gradient(#eaf4f8,#d9eaf0 55%,#c6dde5);box-shadow:0 0 0 2px #dcebf0 inset, 0 2px 3px rgba(120,150,160,0.35)"></div>
<div class="a" style="left:1612px;top:427px;width:77px;height:77px;border-radius:50%;background:radial-gradient(circle at 38% 28%,#ffffff 0,#eef5f8 22%,#cfdfe6 55%,#dbe8ee 78%,#f2f8fa 100%);box-shadow:0 1px 3px rgba(120,150,160,.3)"></div>
<div class="a" style="left:1614px;top:460px;width:70px;height:16px;border-radius:40% 10% 50% 30%;background:linear-gradient(180deg,rgba(40,70,100,.75),rgba(110,140,160,.5) 60%,rgba(200,220,230,0));filter:blur(1px)"></div>
<div class="a" style="left:1640px;top:436px;width:18px;height:14px;border-radius:50%;background:rgba(255,255,255,.85);filter:blur(2px)"></div>
<div class="t" style="left:1361px;top:440px;font-size:15px;color:#3a4a54;letter-spacing:2px">bi</div>
<div class="a" style="left:1374px;top:440px;width:1px;height:16px;background:#222"></div>
<div class="t" style="left:1362px;top:469px;font-size:15px;color:#4a5a64;word-spacing:0"><span style="position:absolute;left:0">1.比</span><span style="position:absolute;left:43px">2.逼</span><span style="position:absolute;left:87px">3.笔</span><span style="position:absolute;left:134px">4.币</span><span style="position:absolute;left:178px">5.：</span></div>
<svg class="a" style="left:1580px;top:472px" width="20" height="12" viewBox="0 0 20 12"><path d="M5 2L1 6l4 4z" fill="#b8c8d0"/><path d="M12 0l7 6-7 6z" fill="#222"/></svg>
<!-- watermark blur -->
<div class="a" style="left:1554px;top:922px;width:278px;height:98px;overflow:hidden;background:linear-gradient(180deg,rgba(232,232,234,0) 0%,rgba(232,230,232,0) 45%,rgba(226,224,228,.95) 100%),linear-gradient(90deg,#e8e8ea 0%,#e6e4de 18%,#d6c4a0 32%,#d0b8a0 48%,#cc90b8 62%,#d494c8 78%,#f6e2f6 100%)">
<div class="a" style="left:-10px;top:-10px;width:300px;height:120px;filter:blur(10px)">
<div class="a" style="left:25px;top:30px;width:60px;height:50px;background:#6c6c70;border-radius:25px"></div>
<div class="a" style="left:80px;top:25px;width:70px;height:55px;background:#746e64;border-radius:25px"></div>
<div class="a" style="left:160px;top:35px;width:40px;height:45px;background:#9a8a98;border-radius:20px"></div>
<div class="a" style="left:200px;top:35px;width:62px;height:55px;background:#6a5668;border-radius:25px"></div>
</div>
</div>
<!-- scrollbar -->
<div class="a" style="left:1909px;top:102px;width:11px;height:973px;background:#f1f1f1"></div>
<div class="a" style="left:1910px;top:119px;width:10px;height:764px;background:#c1c1c1"></div>
<svg class="a" style="left:1911px;top:106px" width="8" height="5" viewBox="0 0 8 5"><path d="M0 5L4 0l4 5z" fill="#a3a3a3"/></svg>
<svg class="a" style="left:1911px;top:1068px" width="8" height="5" viewBox="0 0 8 5"><path d="M0 0l4 5 4-5z" fill="#505050"/></svg>
<!-- bottom black -->
<div class="a" style="left:0;top:1075px;width:1920px;height:5px;background:#000"></div>
<!-- screenshot toolbar -->
<div class="a" style="left:1384px;top:4px;width:536px;height:27px;background:#ededf3"></div>
<div class="a" style="left:1384px;top:33px;width:248px;height:37px;background:#ededf3"></div>
<svg class="a" style="left:1384px;top:4px" width="536" height="27" viewBox="1384 4 536 27" fill="none" stroke="#2a2a2a" stroke-width="1.3">
<rect x="1395.5" y="8.5" width="13" height="13"/>
<circle cx="1429.5" cy="15" r="7.2"/>
<path d="M1449 22l14-14M1456 8h7v7"/>
<path d="M1477 22l2-5 9-9 3 3-9 9z M1486 10l3 3"/>
<rect x="1504.5" y="8.5" width="13" height="13"/>
<rect x="1505" y="9" width="6" height="6" fill="#777" stroke="none"/><rect x="1511" y="15" width="6" height="6" fill="#777" stroke="none"/>
<rect x="1527.5" y="5.5" width="21" height="19" fill="#dcdce4" stroke="#a8a8b0" stroke-width="1"/>
<path d="M1531 22l7-15 7 15M1533.5 17h9"/>
<circle cx="1564.5" cy="15" r="7.5"/>
<path d="M1563 12l2-1v8M1562.5 19h4" stroke-width="1.1"/>
<path d="M1582 8v14" stroke="#c8c8d0"/>
<path d="M1592 11a6.5 6.5 0 1 1 -1 6M1591 8v4h4"/>
<path d="M1618 14V8h12M1631 12v2M1620.5 10.5l8 8M1628.5 10.5l-8 8"/><circle cx="1621" cy="19.5" r="2"/><circle cx="1627.8" cy="19.5" r="2"/>
<path d="M1644.5 9h7.5v7h-7.5zM1648.2 10v5M1646 11.5h4.5v2h-4.5zM1646 17.5l1.5 1.5M1652 13.5h7.5v7.5h-8v-3M1653.5 19.5l2-5 2 5M1654.2 18h2.6M1656 9l2 2" stroke-width="1.2"/>
<path d="M1671 12V8.5h3M1683 8.5h3v3M1686 18v3.5h-3M1674 21.5h-3V18M1674 12.5h10M1679 10.5v2M1676 13l7 7M1682 13l-7 7" stroke-width="1.2"/>
<path d="M1700.5 21.5l5-5M1702 13l6.5 6M1705 16l6-6" /><path d="M1708 10.5l2-2 3 3-2 2z" fill="#2a2a2a"/>
<circle cx="1733" cy="15" r="7.3"/><circle cx="1733" cy="15" r="3.8" fill="#666" stroke="none"/>
<path d="M1759.5 7v10M1755.5 13l4 4 4-4M1753 17v4h13v-4"/>
<rect x="1783" y="8" width="9" height="13"/><path d="M1783 18h9"/>
<path d="M1809 8h11v13l-5.5-4.5-5.5 4.5z"/>
<path d="M1831 8v14" stroke="#c8c8d0"/>
<path d="M1841 9l12 12M1853 9l-12 12"/>
<path d="M1867 15l5 5 10-11"/>
</svg>
<div class="a" style="left:1570px;top:5px;width:6px;height:6px;border-radius:50%;background:#f0521e"></div>
<div class="a" style="left:1630px;top:5px;width:6px;height:6px;border-radius:50%;background:#f0521e"></div>
<div class="a" style="left:1657px;top:5px;width:6px;height:6px;border-radius:50%;background:#f0521e"></div>
<div class="a" style="left:1684px;top:5px;width:6px;height:6px;border-radius:50%;background:#f0521e"></div>
<div class="a" style="left:1711px;top:5px;width:6px;height:6px;border-radius:50%;background:#f0521e"></div>
<div class="t" style="left:1886px;top:9px;font-size:12px;color:#222">完成</div>
<svg class="a" style="left:1390px;top:44px" width="17" height="15" viewBox="0 0 17 15"><path d="M1 15L8.5 1 16 15M4 10h9" stroke="#333" stroke-width="1.2" fill="none"/></svg>
<div class="a" style="left:1414px;top:41px;width:46px;height:21px;background:#fff;border:1px solid #d8d8e0"></div>
<div class="t" style="left:1418px;top:45px;font-size:13px;color:#222">20</div>
<svg class="a" style="left:1445px;top:48px" width="10" height="6" viewBox="0 0 10 6"><path d="M0 0h10L5 6z" fill="#333"/></svg>
<div class="a" style="left:1473px;top:37px;width:28px;height:28px;background:#f8323a;border:1px solid #d8a8a8"></div>
<div class="a" style="left:1505px;top:38px;width:13px;height:12px;background:#000"></div>
<div class="a" style="left:1520px;top:38px;width:13px;height:12px;background:#808080"></div>
<div class="a" style="left:1535px;top:38px;width:13px;height:12px;background:#80000a"></div>
<div class="a" style="left:1550px;top:38px;width:13px;height:12px;background:#f28a40"></div>
<div class="a" style="left:1565px;top:38px;width:13px;height:12px;background:#228a30"></div>
<div class="a" style="left:1580px;top:38px;width:13px;height:12px;background:#3a5ad0"></div>
<div class="a" style="left:1595px;top:38px;width:13px;height:12px;background:#800a8a"></div>
<div class="a" style="left:1610px;top:38px;width:13px;height:12px;background:#10908a"></div>
<div class="a" style="left:1505px;top:52px;width:13px;height:12px;background:#fff;border:1px solid #ccc"></div>
<div class="a" style="left:1520px;top:52px;width:13px;height:12px;background:#bdbdbd"></div>
<div class="a" style="left:1535px;top:52px;width:13px;height:12px;background:#f03a3a"></div>
<div class="a" style="left:1550px;top:52px;width:13px;height:12px;background:#ffff10"></div>
<div class="a" style="left:1565px;top:52px;width:13px;height:12px;background:#98c810"></div>
<div class="a" style="left:1580px;top:52px;width:13px;height:12px;background:#3a98e0"></div>
<div class="a" style="left:1595px;top:52px;width:13px;height:12px;background:#f028f0"></div>
<div class="a" style="left:1610px;top:52px;width:13px;height:12px;background:#20d0c8"></div>
<!--OV_END-->
</body>
</html>
